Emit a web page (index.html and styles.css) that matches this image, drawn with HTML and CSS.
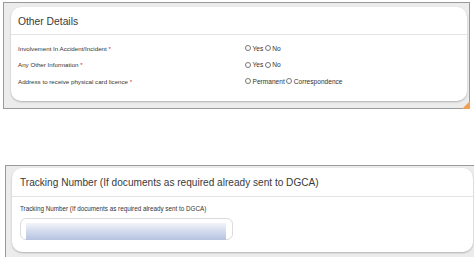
FILE: index.html
```html
<!DOCTYPE html>
<html>
<head>
<meta charset="utf-8">
<link rel="stylesheet" href="styles.css">
</head>
<body>
<div class="frame frame-top">
  <div class="card">
    <div class="card-head">Other Details</div>
    <div class="card-body rows">
      <div class="row">
        <span class="lbl">Involvement In Accident/Incident <span class="req">*</span></span>
        <span class="opts"><input type="radio" name="a"> Yes <input type="radio" name="a"> No</span>
      </div>
      <div class="row">
        <span class="lbl">Any Other Information <span class="req">*</span></span>
        <span class="opts"><input type="radio" name="b"> Yes <input type="radio" name="b"> No</span>
      </div>
      <div class="row">
        <span class="lbl">Address to receive physical card licence <span class="req">*</span></span>
        <span class="opts"><input type="radio" name="c"> Permanent <input type="radio" name="c"> Correspondence</span>
      </div>
    </div>
  </div>
  <span class="corner"></span>
</div>

<div class="frame frame-bottom">
  <div class="card">
    <div class="card-head head-b">Tracking Number (If documents as required already sent to DGCA)</div>
    <div class="card-body track">
      <div class="small-lbl">Tracking Number (If documents as required already sent to DGCA)</div>
      <div class="input"><div class="fill"></div></div>
    </div>
  </div>
</div>
</body>
</html>
```

FILE: styles.css
```css
html, body {
  margin: 0;
  padding: 0;
  background: #ffffff;
  font-family: "Liberation Sans", Arial, sans-serif;
  color: #333;
}

.frame {
  background: #ececec;
  border: 1px solid #9a9a9a;
  box-sizing: border-box;
}

.frame-top {
  position: relative;
  margin: 2px 0 0 3px;
  width: 467px;
  height: 107px;
  padding: 4px 2px 0 7px;
}

.frame-bottom {
  margin: 56px 0 0 5px;
  width: 470px;
  height: 100px;
  padding: 2px 1px 0 6px;
  border-bottom: none;
}

.card {
  background: #fff;
  border-radius: 10px;
  box-shadow: 0 1px 2px rgba(0,0,0,0.25);
}

.frame-top .card {
  height: 94px;
}

.frame-bottom .card {
  height: 84px;
}

.card-head {
  height: 28px;
  box-sizing: border-box;
  padding: 9px 0 0 7px;
  font-size: 10.3px;
  color: #3a3a3a;
  border-bottom: 1px solid #e4e4e4;
}

.head-b {
  height: 29px;
  padding: 9px 0 0 8px;
  font-size: 10.1px;
}

.rows {
  padding: 9px 0 0 7px;
  display: flex;
  flex-direction: column;
  gap: 8.5px;
}

.row {
  display: grid;
  grid-template-columns: 227px auto;
  align-items: center;
  height: 8px;
  font-size: 6.2px;
  color: #333;
}

.req {
  color: #d22;
}

.opts {
  display: flex;
  align-items: center;
  gap: 1.5px;
  font-size: 6.6px;
}

.opts input {
  appearance: none;
  -webkit-appearance: none;
  width: 6px;
  height: 6px;
  margin: 0;
  border: 0.7px solid #777;
  border-radius: 50%;
  background: #fff;
}

.track {
  padding: 8px 0 0 8px;
}

.small-lbl {
  font-size: 6.3px;
  color: #333;
  height: 8px;
}

.input {
  margin-top: 5px;
  width: 213px;
  height: 22px;
  box-sizing: border-box;
  border: 1px solid #dcdcdc;
  border-radius: 6px;
  padding: 4px 6px 0 5px;
}

.fill {
  height: 17px;
  background: linear-gradient(#f2f4f9, #ccd5ea 60%, #b6c2e0);
}

.corner {
  position: absolute;
  right: -1px;
  bottom: -1px;
  width: 0;
  height: 0;
  border-left: 8px solid transparent;
  border-bottom: 8px solid #f0a050;
}
```
